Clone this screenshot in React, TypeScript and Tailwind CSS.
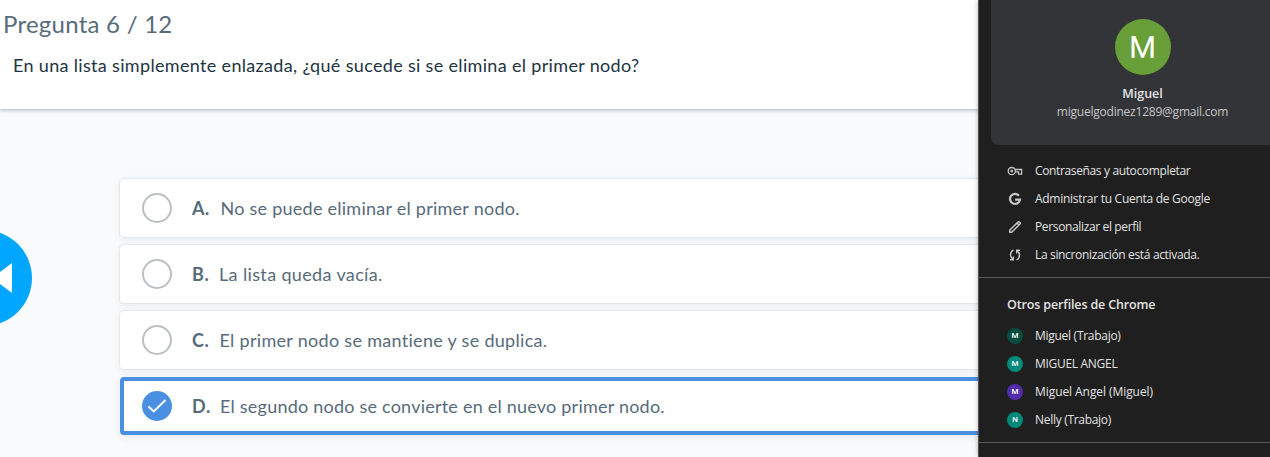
import type { ReactNode } from 'react';

type Option = { letter: string; text: string; tracking: string; selected?: boolean };

const options: Option[] = [
  { letter: 'A.', text: 'No se puede eliminar el primer nodo.', tracking: 'tracking-[0.25px] ml-[28.5px]' },
  { letter: 'B.', text: 'La lista queda vacía.', tracking: 'tracking-[0.36px] ml-[27px]' },
  { letter: 'C.', text: 'El primer nodo se mantiene y se duplica.', tracking: 'tracking-[0.3px] ml-[27.5px]' },
  { letter: 'D.', text: 'El segundo nodo se convierte en el nuevo primer nodo.', tracking: 'tracking-[0.22px] ml-[28px]', selected: true },
];

const KeyIcon = () => (
  <svg width="16" height="16" viewBox="0 0 16 16" fill="none" stroke="#c7c7c7" strokeWidth="1.3">
    <circle cx="4.8" cy="8.1" r="3.6" />
    <circle cx="4.8" cy="8.1" r="1.4" fill="#c7c7c7" stroke="none" />
    <path d="M8 6.5H14.6V11.2H11.5V8.9H8.4" />
  </svg>
);

const GoogleIcon = () => (
  <svg width="16" height="16" viewBox="0 0 16 16" fill="none" stroke="#c7c7c7" strokeWidth="2.3">
    <path d="M11.9 4.7A5 5 0 1 0 13 8.6H8.1" />
  </svg>
);

const PencilIcon = () => (
  <svg width="16" height="16" viewBox="0 0 16 16" fill="none" stroke="#c7c7c7" strokeWidth="1.5" strokeLinejoin="round">
    <path d="M2.7 13.3V11.3L11 3Q11.7 2.3 12.4 3L13 3.6Q13.7 4.3 13 5L4.7 13.3ZM10 4L12 6" />
  </svg>
);

const SyncIcon = () => (
  <svg width="16" height="16" viewBox="0 0 16 16" fill="none" stroke="#c7c7c7" strokeWidth="1.4">
    <path d="M6.5 3.2Q3.5 4.3 3.5 8Q3.5 10.2 5.7 12.2M9.5 12.8Q12.5 11.7 12.5 8Q12.5 5.8 10.3 3.8" />
    <path d="M3 12.7H6.3V9.4M13 3.3H9.7V6.6" />
  </svg>
);

const actions: { icon: ReactNode; text: string; tracking: string }[] = [
  { icon: <KeyIcon />, text: 'Contraseñas y autocompletar', tracking: 'tracking-[-0.36px]' },
  { icon: <GoogleIcon />, text: 'Administrar tu Cuenta de Google', tracking: 'tracking-[-0.28px]' },
  { icon: <PencilIcon />, text: 'Personalizar el perfil', tracking: 'tracking-[-0.36px]' },
  { icon: <SyncIcon />, text: 'La sincronización está activada.', tracking: 'tracking-[-0.34px]' },
];

const profiles = [
  { initial: 'M', text: 'Miguel (Trabajo)', color: 'bg-[#084c40]', tracking: 'tracking-[-0.28px]' },
  { initial: 'M', text: 'MIGUEL ANGEL', color: 'bg-[#00897b]', tracking: 'tracking-[-0.3px]' },
  { initial: 'M', text: 'Miguel Angel (Miguel)', color: 'bg-[#512da8]', tracking: 'tracking-[-0.07px]' },
  { initial: 'N', text: 'Nelly (Trabajo)', color: 'bg-[#00897b]', tracking: 'tracking-[-0.3px]' },
];

function OptionCard({ letter, text, tracking, selected }: Option) {
  return (
    <li
      className={
        selected
          ? 'flex h-[58px] items-center rounded-[4px] border-4 border-[#4a90e2] bg-white pl-[18px] shadow-[0_2px_8px_rgba(30,50,60,0.09)]'
          : 'flex h-[58px] items-center rounded-[4px] bg-white pl-[22px] shadow-[0_0_2px_rgba(30,60,60,0.22),0_2px_8px_rgba(30,50,60,0.07)]'
      }
    >
      {selected ? (
        <span className="flex size-[30px] shrink-0 items-center justify-center rounded-full bg-[#4a90e2]">
          <svg width="20" height="16" viewBox="0 0 20 16" fill="none" stroke="white" strokeWidth="2">
            <path d="M1.5 8.5L6.8 13.4L18.5 2" />
          </svg>
        </span>
      ) : (
        <span className="size-[30px] shrink-0 rounded-full border-2 border-[#b8c0c6]" />
      )}
      <span className="ml-5 flex items-baseline whitespace-nowrap text-[18px] leading-6 text-[#586b7a]">
        <b className="w-0 tracking-[0.6px]">{letter}</b>
        <span className={tracking}>{text}</span>
      </span>
    </li>
  );
}

export default function App() {
  return (
    <div className="flex h-[457px] w-[1270px] overflow-hidden bg-[#f9fafc]">
      <main className="flex w-[978px] shrink-0 flex-col overflow-hidden font-['Lato',sans-serif]">
        <header className="-mr-4 h-[109px] shrink-0 bg-white shadow-[0_1px_4px_rgba(20,45,55,0.35)]">
          <h1 className="whitespace-nowrap pl-[3px] pt-2 text-[24px] leading-8 tracking-[0.25px] text-[#586b7a]">Pregunta 6 / 12</h1>
          <p className="whitespace-nowrap pl-[13px] pt-[13px] text-[18px] leading-6 tracking-[0.33px] text-[#1d3442]">
            En una lista simplemente enlazada, ¿qué sucede si se elimina el primer nodo?
          </p>
        </header>
        <div className="flex">
          <div className="flex w-[120px] shrink-0 items-start pt-[121px]">
            <button className="-ml-16 flex size-24 items-center justify-end rounded-full bg-[#00a6ff] pr-5" aria-label="Anterior">
              <svg width="20" height="30" viewBox="0 0 20 30" fill="white">
                <path d="M20 0V30L0 15Z" />
              </svg>
            </button>
          </div>
          <ul className="-mr-4 flex flex-1 flex-col gap-2 pt-[70px]">
            {options.map((o) => (
              <OptionCard key={o.letter} {...o} />
            ))}
          </ul>
        </div>
      </main>
      <aside className="z-10 flex w-[292px] shrink-0 flex-col border-l border-[#505254] bg-[#1f1f1f] font-['Open_Sans',sans-serif] text-[12px] text-[#e3e3e3] shadow-[0_0_5px_rgba(0,0,0,0.3)]">
        <section className="ml-3 flex h-[145px] shrink-0 flex-col items-center rounded-bl-[8px] bg-[#333438] pl-6 pt-[19px]">
          <div className="flex size-14 items-center justify-center rounded-full bg-[#689f38] font-['Roboto',sans-serif] text-[31px] leading-none text-white">
            M
          </div>
          <div className="mt-[11px] text-[12.5px] font-semibold leading-4">Miguel</div>
          <div className="mt-[2px] text-[12px] leading-4 tracking-[-0.22px] text-[#c7c7c7]">miguelgodinez1289@gmail.com</div>
        </section>
        <ul className="mt-3 h-[120px] shrink-0">
          {actions.map((a) => (
            <li key={a.text} className="flex h-7 items-center pl-7">
              <span className="mr-3">{a.icon}</span>
              <span className={`whitespace-nowrap ${a.tracking}`}>{a.text}</span>
            </li>
          ))}
        </ul>
        <hr className="border-[#5b5b5b]" />
        <h2 className="mt-[17px] whitespace-nowrap pl-7 text-[12.5px] font-semibold leading-5 tracking-[-0.14px]">Otros perfiles de Chrome</h2>
        <ul className="mt-[7px] h-[120px] shrink-0">
          {profiles.map((p) => (
            <li key={p.text} className="flex h-7 items-center pl-7">
              <span className={`mr-3 flex size-4 items-center justify-center rounded-full font-['Roboto',sans-serif] text-[8px] font-medium text-white ${p.color}`}>
                {p.initial}
              </span>
              <span className={`whitespace-nowrap ${p.tracking}`}>{p.text}</span>
            </li>
          ))}
        </ul>
        <hr className="border-[#5b5b5b]" />
      </aside>
    </div>
  );
}
